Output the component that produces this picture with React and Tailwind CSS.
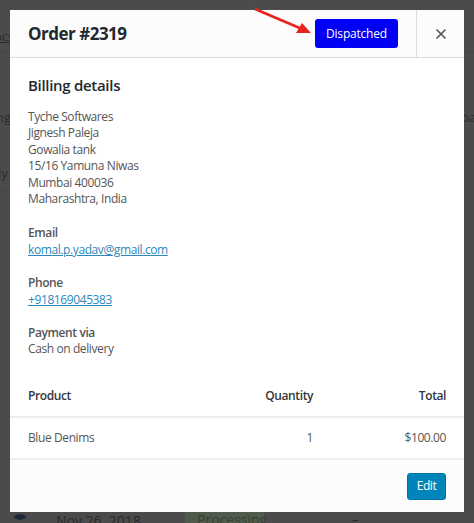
import { X } from 'lucide-react';

const address = ['Tyche Softwares', 'Jignesh Paleja', 'Gowalia tank', '15/16 Yamuna Niwas', 'Mumbai 400036', 'Maharashtra, India'];

// dimmed admin list behind the modal
function Backdrop() {
  return (
    <div className="absolute inset-0 bg-[#4b4b4b] text-[13px] text-[#2c2c2c]">
      <div className="absolute left-[-6px] top-[27px] underline">ocs</div>
      <div className="absolute left-0 right-0 top-[52px] h-px bg-[#444]" />
      <div className="absolute left-[-4px] top-[108px]">ng</div>
      <div className="absolute left-[-2px] top-[164px]">ly</div>
      <div className="absolute left-0 w-[10px] top-[190px] h-px bg-[#444]" />
      <div className="absolute left-[461px] top-[108px]">pa</div>
      <div className="absolute left-0 right-0 top-[513px] h-[10px]">
        <svg className="absolute left-[13px] top-0" width="14" height="8" viewBox="0 0 14 8">
          <path d="M0 4 Q7 -2 14 4 Q7 10 0 4Z" fill="#1d2a3a" />
        </svg>
        <span className="absolute left-[56px] top-[-3px] text-[14px] text-[#2a2a2a]">Nov 26, 2018</span>
        <span className="absolute left-[185px] top-[-4px] w-[79px] h-[16px] bg-[#505a4c] text-[14px] text-[#374231] pl-[12px]">Processing</span>
        <span className="absolute left-[352px] top-[-3px] text-[#2a2a2a]">–</span>
      </div>
    </div>
  );
}

export default function App() {
  return (
    <div className="relative w-[474px] h-[523px] overflow-hidden" style={{ fontFamily: '"Open Sans", "Noto Sans", sans-serif' }}>
      <Backdrop />

      <div className="absolute left-[10px] top-[10px] w-[454px] h-[502px] bg-white flex flex-col text-[#555] text-[12px] tracking-[-0.4px]">
        <div className="h-[48px] flex items-stretch bg-[#fcfcfc] border-b border-[#dddddd]">
          <div className="flex-1 flex items-center pl-[18px] pr-[18px]">
            <h1 className="text-[17px] font-bold text-[#23282d] leading-none tracking-[-0.5px]">Order #2319</h1>
            <button className="ml-auto h-[29px] w-[83px] rounded-[3px] bg-[#0000f4] text-white text-[12px] tracking-[-0.2px]">Dispatched</button>
          </div>
          <button className="w-[48px] border-l border-[#dddddd] flex items-center justify-center text-[#555]">
            <X size={16} strokeWidth={2.5} />
          </button>
        </div>

        <div className="flex-1 px-[18px] pt-[15px]">
          <h2 className="text-[15px] font-semibold text-[#23282d] leading-[24px] tracking-[-0.3px]">Billing details</h2>
          <div className="mt-[12px] leading-[16.4px]">
            {address.map((l) => (
              <div key={l}>{l}</div>
            ))}
          </div>
          <div className="mt-[18px] leading-[16.4px]">
            <div className="font-semibold">Email</div>
            <a className="text-[#2c88bd] underline">komal.p.yadav@gmail.com</a>
          </div>
          <div className="mt-[17px] leading-[16.4px]">
            <div className="font-semibold">Phone</div>
            <a className="text-[#2c88bd] underline">+918169045383</a>
          </div>
          <div className="mt-[17px] leading-[16.4px]">
            <div className="font-semibold">Payment via</div>
            <div>Cash on delivery</div>
          </div>
        </div>

        <table className="w-full">
          <thead>
            <tr className="border-b-2 border-[#eeeeee] text-[#32373c]">
              <th className="text-left font-semibold pl-[18px] h-[41px]">Product</th>
              <th className="text-right font-semibold">Quantity</th>
              <th className="text-right font-semibold pr-[18px] w-[151px]">Total</th>
            </tr>
          </thead>
          <tbody>
            <tr className="border-b-2 border-[#eeeeee]">
              <td className="pl-[18px] h-[42px]">Blue Denims</td>
              <td className="text-right">1</td>
              <td className="text-right pr-[18px]">$100.00</td>
            </tr>
          </tbody>
        </table>

        <div className="h-[52px] bg-[#fcfcfc] flex items-center justify-end pr-[18px]">
          <button className="h-[27px] w-[39px] rounded-[3px] bg-[#0085ba] border border-[#0073aa] text-white">Edit</button>
        </div>
      </div>

      <svg className="absolute left-0 top-0 pointer-events-none" width="474" height="523">
        <line x1="255" y1="9" x2="302" y2="29" stroke="#e8231d" strokeWidth="2.5" />
        <polygon points="311,33 296,33 302,23" fill="#e8231d" />
      </svg>
    </div>
  );
}
